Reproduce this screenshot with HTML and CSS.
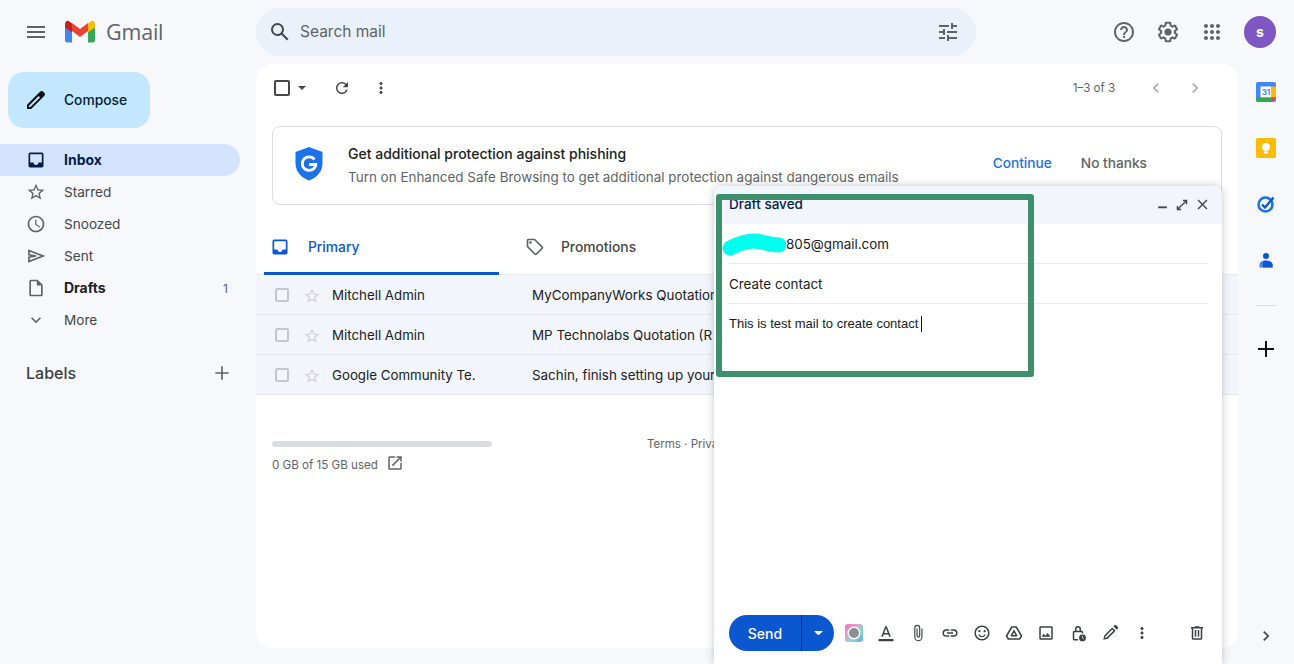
FILE: index.html
```html
<!DOCTYPE html>
<html lang="en">
<head>
<meta charset="utf-8">
<title>Gmail</title>
<link rel="stylesheet" href="styles.css">
</head>
<body>
<div class="app">
  <header class="topbar">
    <div class="brand">
      <svg class="ico menu-ico" viewBox="0 0 24 24"><path d="M3 18h18v-2H3v2zm0-5h18v-2H3v2zm0-7v2h18V6H3z"/></svg>
      <svg class="gmail-m" viewBox="0 0 30 23" width="30" height="23">
        <path fill="#4285f4" d="M0 6v14.500A2.200 2.200 0 0 0 2.200 22.500H7V10.500z"/>
        <path fill="#34a853" d="M23 10.500V22.500h4.800A2.200 2.200 0 0 0 30 20.500V6z"/>
        <path fill="#ea4335" d="M7 11V3l8 6 8-6v8l-8 6z"/>
        <path fill="#c5221f" d="M0 4.800V7.500l7 5V3.500L4 1.200C2.200 0 0 1.500 0 4.800z"/>
        <path fill="#fbbc04" d="M23 3.500v9l7-5V4.800c0-3.300-2.200-4.800-4-3.600z"/>
      </svg>
      <span class="wordmark">Gmail</span>
    </div>
    <div class="search">
      <svg class="ico search-ico" viewBox="0 0 24 24"><path d="M20.490 19l-5.730-5.730A6.960 6.960 0 0 0 16 9.500 6.500 6.500 0 1 0 9.500 16c1.420 0 2.730-.46 3.800-1.230L19 20.490 20.490 19zM5 9.500C5 7.010 7.010 5 9.500 5S14 7.010 14 9.500 11.990 14 9.500 14 5 11.990 5 9.500z"/></svg>
      <span class="search-text">Search mail</span>
      <svg class="ico" viewBox="0 0 24 24"><path d="M3 17v2h6v-2H3zM3 5v2h10V5H3zm10 16v-2h8v-2h-8v-2h-2v6h2zM7 9v2H3v2h4v2h2V9H7zm14 4v-2H11v2h10zm-6-4h2V7h4V5h-4V3h-2v6z"/></svg>
    </div>
    <div class="top-actions">
      <svg class="ico" viewBox="0 0 24 24"><path d="M11 18h2v-2h-2v2zm1-16C6.480 2 2 6.480 2 12s4.480 10 10 10 10-4.480 10-10S17.520 2 12 2zm0 18c-4.410 0-8-3.590-8-8s3.590-8 8-8 8 3.590 8 8-3.590 8-8 8zm0-14c-2.210 0-4 1.790-4 4h2c0-1.100.9-2 2-2s2 .9 2 2c0 2-3 1.750-3 5h2c0-2.250 3-2.500 3-5 0-2.210-1.790-4-4-4z"/></svg>
      <svg class="ico" viewBox="0 0 24 24"><path d="M13.850 22.250h-3.700c-.74 0-1.360-.54-1.470-1.270l-.27-1.890c-.27-.14-.53-.29-.79-.46l-1.800.72c-.7.260-1.470-.03-1.810-.65L2.200 15.530c-.35-.66-.2-1.440.36-1.880l1.530-1.190c-.01-.15-.02-.3-.02-.46 0-.15.010-.31.020-.46l-1.520-1.190c-.59-.45-.74-1.260-.37-1.880l1.850-3.190c.34-.62 1.110-.9 1.790-.63l1.810.73c.26-.17.520-.32.780-.46l.27-1.910c.110-.7.730-1.250 1.460-1.250h3.700c.74 0 1.360.54 1.470 1.270l.27 1.890c.27.140.53.29.79.46l1.800-.72c.71-.26 1.480.03 1.820.65l1.840 3.180c.36.66.2 1.440-.36 1.880l-1.520 1.190c.01.15.02.3.02.46s-.01.31-.02.46l1.520 1.190c.56.45.72 1.230.37 1.860l-1.860 3.220c-.34.62-1.110.9-1.800.63l-1.800-.72c-.26.17-.52.32-.78.46l-.27 1.910c-.1.680-.72 1.220-1.450 1.220zm-3.230-2h2.760l.37-2.550.53-.22c.44-.18.880-.44 1.340-.78l.45-.34 2.380.96 1.380-2.400-2.030-1.580.07-.56c.03-.26.060-.51.060-.78s-.03-.53-.06-.78l-.07-.56 2.030-1.580-1.390-2.400-2.390.96-.45-.35c-.42-.32-.87-.58-1.330-.77l-.52-.22-.37-2.550h-2.760l-.37 2.550-.53.21c-.44.190-.88.440-1.340.79l-.45.330-2.380-.95-1.390 2.390 2.030 1.580-.07.56a7 7 0 0 0-.06.79c0 .26.020.53.060.78l.07.56-2.030 1.580 1.380 2.400 2.390-.96.45.35c.43.330.86.580 1.330.77l.53.22.38 2.550z"/><circle cx="12" cy="12" r="3.500"/></svg>
      <svg class="ico" viewBox="0 0 24 24"><path d="M6 8c1.100 0 2-.9 2-2s-.9-2-2-2-2 .9-2 2 .9 2 2 2zm6 12c1.100 0 2-.9 2-2s-.9-2-2-2-2 .9-2 2 .9 2 2 2zm-6 0c1.100 0 2-.9 2-2s-.9-2-2-2-2 .9-2 2 .9 2 2 2zm0-6c1.100 0 2-.9 2-2s-.9-2-2-2-2 .9-2 2 .9 2 2 2zm6 0c1.100 0 2-.9 2-2s-.9-2-2-2-2 .9-2 2 .9 2 2 2zm4-8c0 1.100.9 2 2 2s2-.9 2-2-.9-2-2-2-2 .9-2 2zm-4 2c1.100 0 2-.9 2-2s-.9-2-2-2-2 .9-2 2 .9 2 2 2zm6 6c1.100 0 2-.9 2-2s-.9-2-2-2-2 .9-2 2 .9 2 2 2zm0 6c1.100 0 2-.9 2-2s-.9-2-2-2-2 .9-2 2 .9 2 2 2z"/></svg>
      <span class="avatar">s</span>
    </div>
  </header>

  <div class="body-row">
    <aside class="sidebar">
      <button class="compose">
        <svg class="ico compose-ico" viewBox="0 0 24 24"><path d="M20.410 4.940l-1.350-1.350c-.78-.78-2.050-.78-2.830 0L3 16.820V21h4.180L20.410 7.770c.79-.78.79-2.050 0-2.830zm-14 14.120L5 19v-1.360l9.660-9.660 1.410 1.410-9.660 9.670z"/></svg>
        <span>Compose</span>
      </button>
      <nav class="nav">
        <div class="nav-item active">
          <svg class="ico" viewBox="0 0 24 24"><path d="M19 3H5c-1.100 0-2 .9-2 2v14c0 1.100.9 2 2 2h14c1.100 0 2-.9 2-2V5c0-1.100-.9-2-2-2zm0 12h-4c0 1.660-1.350 3-3 3s-3-1.340-3-3H5V5h14v10z"/></svg>
          <span class="nav-label">Inbox</span>
        </div>
        <div class="nav-item">
          <svg class="ico" viewBox="0 0 24 24"><path d="M22 9.240l-7.190-.62L12 2 9.190 8.630 2 9.240l5.460 4.730L5.820 21 12 17.270 18.180 21l-1.630-7.030L22 9.240zM12 15.400l-3.760 2.270 1-4.280-3.320-2.880 4.380-.38L12 6.100l1.710 4.040 4.380.38-3.320 2.880 1 4.280L12 15.400z"/></svg>
          <span class="nav-label">Starred</span>
        </div>
        <div class="nav-item">
          <svg class="ico" viewBox="0 0 24 24"><path d="M11.990 2C6.470 2 2 6.480 2 12s4.470 10 9.990 10C17.520 22 22 17.520 22 12S17.520 2 11.990 2zM12 20c-4.420 0-8-3.580-8-8s3.580-8 8-8 8 3.580 8 8-3.580 8-8 8zm.5-13H11v6l5.250 3.150.75-1.230-4.500-2.670V7z"/></svg>
          <span class="nav-label">Snoozed</span>
        </div>
        <div class="nav-item">
          <svg class="ico" viewBox="0 0 24 24"><path class="sent-path" d="M3.500 5.500L20.500 12 3.500 18.500v-5L12 12 3.500 10.500z"/></svg>
          <span class="nav-label">Sent</span>
        </div>
        <div class="nav-item bold">
          <svg class="ico" viewBox="0 0 24 24"><path d="M14 2H6c-1.100 0-2 .9-2 2v16c0 1.100.9 2 2 2h12c1.100 0 2-.9 2-2V8l-6-6zM6 20V4h7v5h5v11H6z"/></svg>
          <span class="nav-label">Drafts</span>
          <span class="nav-count">1</span>
        </div>
        <div class="nav-item">
          <svg class="ico" viewBox="0 0 24 24"><path d="M16.590 8.590L12 13.170 7.410 8.590 6 10l6 6 6-6z"/></svg>
          <span class="nav-label">More</span>
        </div>
      </nav>
      <div class="labels">
        <span>Labels</span>
        <svg class="ico" viewBox="0 0 24 24"><path d="M20 13h-7v7h-2v-7H4v-2h7V4h2v7h7v2z"/></svg>
      </div>
    </aside>

    <main class="panel">
      <div class="toolbar">
        <div class="tool-left">
          <span class="checkbox dark"></span>
          <svg class="caret" viewBox="0 0 10 5" width="8" height="4"><path d="M0 0l5 5 5-5z"/></svg>
          <svg class="ico tool-ico" viewBox="0 0 24 24"><path d="M17.650 6.350A7.960 7.960 0 0 0 12 4a8 8 0 1 0 7.730 10h-2.080A6 6 0 1 1 12 6c1.660 0 3.140.69 4.220 1.780L13 11h7V4l-2.350 2.350z"/></svg>
          <svg class="ico tool-ico" viewBox="0 0 24 24"><path d="M12 8c1.100 0 2-.9 2-2s-.9-2-2-2-2 .9-2 2 .9 2 2 2zm0 2c-1.100 0-2 .9-2 2s.9 2 2 2 2-.9 2-2-.9-2-2-2zm0 6c-1.100 0-2 .9-2 2s.9 2 2 2 2-.9 2-2-.9-2-2-2z"/></svg>
        </div>
        <div class="tool-right">
          <span class="pager">1–3 of 3</span>
          <svg class="ico tool-ico dim" viewBox="0 0 24 24"><path d="M15.410 7.410L14 6l-6 6 6 6 1.410-1.410L10.830 12z"/></svg>
          <svg class="ico tool-ico dim" viewBox="0 0 24 24"><path d="M10 6L8.590 7.410 13.170 12l-4.580 4.590L10 18l6-6z"/></svg>
        </div>
      </div>

      <section class="banner">
        <svg class="shield" viewBox="0 0 30 34" width="30" height="34"><path fill="#1a73e8" d="M15 0l13.500 5v11c0 8.500-5.500 14.500-13.500 17.500C7 30.500 1.500 24.500 1.500 16V5z"/><path fill="none" stroke="#fff" stroke-width="2.800" d="M20.500 12.500A6.800 6.800 0 1 0 21.800 17.500H15"/></svg>
        <div class="banner-text">
          <div class="banner-title">Get additional protection against phishing</div>
          <div class="banner-sub">Turn on Enhanced Safe Browsing to get additional protection against dangerous emails</div>
        </div>
        <div class="banner-actions">
          <span class="continue">Continue</span>
          <span class="nothanks">No thanks</span>
        </div>
      </section>

      <div class="tabs">
        <div class="tab active">
          <svg class="ico tab-ico" viewBox="0 0 24 24"><path d="M19 3H5c-1.100 0-2 .9-2 2v14c0 1.100.9 2 2 2h14c1.100 0 2-.9 2-2V5c0-1.100-.9-2-2-2zm0 12h-4c0 1.660-1.350 3-3 3s-3-1.340-3-3H5V5h14v10z"/></svg>
          <span>Primary</span>
        </div>
        <div class="tab">
          <svg class="ico tab-ico" viewBox="0 0 24 24"><path d="M21.410 11.410l-8.830-8.830C12.210 2.210 11.700 2 11.170 2H4c-1.100 0-2 .9-2 2v7.170c0 .53.210 1.040.59 1.410l8.830 8.830c.78.78 2.050.78 2.830 0l7.170-7.170c.78-.78.78-2.050-.01-2.830zM12.830 20L4 11.170V4h7.170L20 12.830 12.830 20z"/><circle cx="6.500" cy="6.500" r="1.500"/></svg>
          <span>Promotions</span>
        </div>
      </div>

      <div class="rows">
        <div class="row">
          <span class="checkbox"></span>
          <svg class="star" viewBox="0 0 24 24"><path d="M22 9.240l-7.190-.62L12 2 9.190 8.630 2 9.240l5.460 4.730L5.820 21 12 17.270 18.180 21l-1.630-7.030L22 9.240zM12 15.400l-3.760 2.270 1-4.280-3.320-2.880 4.380-.38L12 6.100l1.710 4.040 4.380.38-3.320 2.880 1 4.280L12 15.400z"/></svg>
          <span class="sender">Mitchell Admin</span>
          <span class="subject">MyCompanyWorks Quotation</span>
        </div>
        <div class="row">
          <span class="checkbox"></span>
          <svg class="star" viewBox="0 0 24 24"><path d="M22 9.240l-7.190-.62L12 2 9.190 8.630 2 9.240l5.460 4.730L5.820 21 12 17.270 18.180 21l-1.630-7.030L22 9.240zM12 15.400l-3.760 2.270 1-4.280-3.320-2.880 4.380-.38L12 6.100l1.710 4.040 4.380.38-3.320 2.880 1 4.280L12 15.400z"/></svg>
          <span class="sender">Mitchell Admin</span>
          <span class="subject">MP Technolabs Quotation (R</span>
        </div>
        <div class="row">
          <span class="checkbox"></span>
          <svg class="star" viewBox="0 0 24 24"><path d="M22 9.240l-7.190-.62L12 2 9.190 8.630 2 9.240l5.460 4.730L5.820 21 12 17.270 18.180 21l-1.630-7.030L22 9.240zM12 15.400l-3.760 2.270 1-4.280-3.320-2.880 4.380-.38L12 6.100l1.710 4.040 4.380.38-3.320 2.880 1 4.280L12 15.400z"/></svg>
          <span class="sender">Google Community Te.</span>
          <span class="subject">Sachin, finish setting up your</span>
        </div>
      </div>

      <footer class="foot">
        <div class="storage">
          <div class="storage-bar"></div>
          <div class="storage-text">
            <span>0 GB of 15 GB used</span>
            <svg class="ico open-ico" viewBox="0 0 24 24"><path d="M19 19H5V5h7V3H5a2 2 0 0 0-2 2v14a2 2 0 0 0 2 2h14c1.100 0 2-.9 2-2v-7h-2v7zM14 3v2h3.590l-9.830 9.830 1.410 1.410L19 6.410V10h2V3h-7z"/></svg>
          </div>
        </div>
        <div class="terms">Terms · Priva</div>
      </footer>
    </main>

    <aside class="rail">
      <svg class="rail-app" viewBox="0 0 20 20" width="20" height="20">
        <rect width="20" height="20" rx="2" fill="#4285f4"/>
        <rect x="4.500" y="4.500" width="11" height="11" fill="#fff"/>
        <rect x="15.500" y="4.500" width="4.500" height="11" fill="#fbbc04"/>
        <path d="M0 15.500h15.500V20H2a2 2 0 0 1-2-2z" fill="#34a853"/>
        <path d="M15.500 15.500H20L15.500 20z" fill="#ea4335"/>
        <text x="10" y="13" class="cal-num">31</text>
      </svg>
      <svg class="rail-app" viewBox="0 0 20 20" width="20" height="20">
        <rect width="20" height="20" rx="2" fill="#fbbc04"/>
        <circle cx="10" cy="9" r="4" fill="#fff"/>
        <rect x="8" y="13.500" width="4" height="2" fill="#fff"/>
      </svg>
      <svg class="rail-app" viewBox="0 0 20 20" width="20" height="20">
        <circle cx="9.500" cy="10.500" r="7" fill="none" stroke="#1a73e8" stroke-width="2.600"/>
        <path d="M6 10.500l3 3 8.500-10" fill="none" stroke="#0b57d0" stroke-width="2.400"/>
      </svg>
      <svg class="rail-app" viewBox="0 0 20 20" width="20" height="20">
        <circle cx="10" cy="6" r="3" fill="#0b57d0"/>
        <path d="M3.500 17.500v-3c0-2.500 3-4 6.500-4s6.500 1.500 6.500 4v3z" fill="#4285f4"/>
        <path d="M7 17.500v-5c0-1.200 1.500-2 3-2s6.500 1.500 6.500 4v3z" fill="#0b57d0"/>
      </svg>
      <div class="rail-sep"></div>
      <svg class="ico rail-plus" viewBox="0 0 24 24"><path d="M20 13h-7v7h-2v-7H4v-2h7V4h2v7h7v2z"/></svg>
      <svg class="ico rail-next" viewBox="0 0 24 24"><path d="M10 6L8.590 7.410 13.170 12l-4.580 4.590L10 18l6-6z"/></svg>
    </aside>
  </div>
</div>

<section class="composer">
  <div class="composer-head">
    <span class="composer-title">Draft saved</span>
    <div class="composer-win">
      <svg viewBox="0 0 24 24" class="win-ico"><path d="M5 15h14v3H5z"/></svg>
      <svg viewBox="0 0 24 24" class="win-ico expand"><path d="M21 3h-7.500v2.400h3.400L5.400 16.900V13.500H3V21h7.500v-2.400H7.100L18.600 7.100v3.400H21z"/></svg>
      <svg viewBox="0 0 24 24" class="win-ico close"><path d="M19 6.410L17.590 5 12 10.590 6.410 5 5 6.410 10.590 12 5 17.590 6.410 19 12 13.410 17.590 19 19 17.590 13.410 12z"/></svg>
    </div>
  </div>
  <div class="composer-fields">
    <div class="field">805@gmail.com</div>
    <div class="field">Create contact</div>
    <div class="composer-body">This is test mail to create contact<span class="cursor"></span></div>
  </div>
  <div class="composer-foot">
    <div class="send">
      <span class="send-main">Send</span>
      <span class="send-more"><svg viewBox="0 0 10 5" width="9" height="4.500"><path d="M0 0l5 5 5-5z" fill="#fff"/></svg></span>
    </div>
    <svg class="c-ico" viewBox="0 0 18 18"><defs><linearGradient id="rb" x1="0" y1="0" x2="1" y2="1"><stop offset="0" stop-color="#f06bb0"/><stop offset=".35" stop-color="#e9a0d0"/><stop offset=".65" stop-color="#7fd8c8"/><stop offset="1" stop-color="#6aa5f5"/></linearGradient></defs><rect width="18" height="18" rx="3" fill="url(#rb)"/><circle cx="9" cy="9" r="6.500" fill="#fff"/><circle cx="9" cy="9" r="5" fill="#8a8f94"/></svg>
    <svg class="c-ico" viewBox="0 0 24 24"><path d="M2 20h20v3H2z" fill="#3c4043"/><path d="M11 3L5.500 17h2.300l1.100-3h6.200l1.100 3h2.300L13 3zm-1.400 9L12 5.700 14.400 12z"/></svg>
    <svg class="c-ico" viewBox="0 0 24 24"><path d="M16.500 6v11.500a4 4 0 0 1-8 0V5a2.500 2.500 0 0 1 5 0v10.500a1 1 0 0 1-2 0V6H10v9.500a2.500 2.500 0 0 0 5 0V5a4 4 0 0 0-8 0v12.500a5.500 5.500 0 0 0 11 0V6z"/></svg>
    <svg class="c-ico" viewBox="0 0 24 24"><path d="M3.900 12c0-1.710 1.390-3.100 3.100-3.100h4V7H7a5 5 0 0 0 0 10h4v-1.900H7c-1.710 0-3.100-1.390-3.100-3.100zM8 13h8v-2H8v2zm9-6h-4v1.900h4c1.710 0 3.100 1.390 3.100 3.100s-1.390 3.100-3.100 3.100h-4V17h4a5 5 0 0 0 0-10z"/></svg>
    <svg class="c-ico" viewBox="0 0 24 24"><circle cx="15.500" cy="9.500" r="1.500"/><circle cx="8.500" cy="9.500" r="1.500"/><path d="M11.990 2C6.470 2 2 6.480 2 12s4.470 10 9.990 10C17.520 22 22 17.520 22 12S17.520 2 11.990 2zM12 20c-4.420 0-8-3.580-8-8s3.580-8 8-8 8 3.580 8 8-3.580 8-8 8zm0-4c-1.480 0-2.750-.81-3.450-2H6.880c.8 2.050 2.790 3.500 5.120 3.500s4.320-1.450 5.120-3.500h-1.670c-.7 1.190-1.970 2-3.450 2z"/></svg>
    <svg class="c-ico" viewBox="0 0 24 24"><path fill="none" stroke="#3c4043" stroke-width="2" stroke-linejoin="round" d="M9 4h6l7 12-2.500 4h-15L2 16zM12 9l-3.500 6.500h7z"/></svg>
    <svg class="c-ico" viewBox="0 0 24 24"><path d="M19 5v14H5V5h14m0-2H5c-1.100 0-2 .9-2 2v14c0 1.100.9 2 2 2h14c1.100 0 2-.9 2-2V5c0-1.100-.9-2-2-2zm-4.860 8.860l-3 3.870L9 13.140 6 17h12l-3.860-5.140z"/></svg>
    <svg class="c-ico" viewBox="0 0 24 24"><path d="M17 9h-1V6.500a4 4 0 0 0-8 0V9H7a2 2 0 0 0-2 2v9a2 2 0 0 0 2 2h5v-2H7v-9h10v1.500h2V11a2 2 0 0 0-2-2zm-3 0h-4V6.500a2 2 0 0 1 4 0z"/><circle cx="18" cy="18.500" r="4.500"/><path d="M18 16v2.700l1.800 1" stroke="#fff" stroke-width="1" fill="none"/></svg>
    <svg class="c-ico" viewBox="0 0 24 24"><path d="M3 21l1.500-6L15 4.500l4.500 4.500L9 19.500zM6.200 16l-.8 2.600 2.600-.8L16.700 9 15 7.300zM16.500 3l1.500-1.500a1.500 1.500 0 0 1 2 0l2.500 2.500a1.500 1.500 0 0 1 0 2L21 7.500z"/></svg>
    <svg class="c-ico" viewBox="0 0 24 24"><path d="M12 8c1.100 0 2-.9 2-2s-.9-2-2-2-2 .9-2 2 .9 2 2 2zm0 2c-1.100 0-2 .9-2 2s.9 2 2 2 2-.9 2-2-.9-2-2-2zm0 6c-1.100 0-2 .9-2 2s.9 2 2 2 2-.9 2-2-.9-2-2-2z"/></svg>
    <svg class="c-ico trash" viewBox="0 0 24 24"><path d="M15 4V3H9v1H4v2h1v13c0 1.100.9 2 2 2h10c1.100 0 2-.9 2-2V6h1V4h-5zm2 15H7V6h10v13zM9 8h2v9H9zm4 0h2v9h-2z"/></svg>
  </div>
</section>

<svg class="scribble" viewBox="0 0 64 26" width="64" height="26"><path d="M8 17C16 13 24 10 32 10c8 0 14 4 25 4" fill="none" stroke="#00ffee" stroke-width="15" stroke-linecap="round"/></svg>
<div class="highlight"></div>
</body>
</html>
```
FILE: styles.css
```css
* { box-sizing: border-box; }
html, body { margin: 0; height: 100%; overflow: hidden; }
body {
  background: #f6f8fc;
  font-family: Inter, "Liberation Sans", sans-serif;
  color: #202124;
  font-size: 13.400px;
}
.ico { width: 24px; height: 24px; fill: #5f6368; flex: none; display: block; }
.app { width: 1294px; height: 664px; display: flex; flex-direction: column; }

/* top bar */
.topbar { height: 64px; display: flex; align-items: center; flex: none; }
.brand { width: 256px; display: flex; align-items: center; padding-left: 24px; flex: none; }
.menu-ico { margin-right: 17px; fill: #5f6368; }
.gmail-m { flex: none; margin-top: -1px; }
.wordmark { font-family: "Open Sans", sans-serif; font-size: 21.500px; color: #5f6368; margin: -1px 0 0 11px; letter-spacing: -0.2px; }
.search {
  width: 720px; height: 48px; background: #eaf1fb; border-radius: 24px;
  display: flex; align-items: center; padding: 0 8px 0 12px;
}
.search-text { flex: 1; margin: -2px 0 0 8px; font-size: 15.500px; color: #5f6368; }
.search .ico:last-child { margin-right: 8px; }
.search-ico { fill: #444746; }
.top-actions { margin-left: auto; display: flex; align-items: center; gap: 20px; padding-right: 18px; margin-top: -1px; }
.avatar {
  width: 32px; height: 32px; border-radius: 50%; background: #7e57c2; color: #fff;
  display: flex; align-items: center; justify-content: center; font-size: 14px; font-weight: 700;
}

/* layout */
.body-row { flex: 1; display: flex; min-height: 0; }
.sidebar { width: 256px; flex: none; }
.compose {
  margin: 8px 0 0 8px; width: 142px; height: 56px; border: 0; border-radius: 16px;
  background: #c2e7ff; display: flex; align-items: center; padding: 0 0 0 16px;
  font: 500 13.800px Inter, sans-serif; color: #001d35;
}
.compose span { margin-left: 16px; margin-top: -1px; }
.compose-ico { fill: #111; }
.nav { margin-top: 16px; width: 240px; }
.nav-item { height: 32px; display: flex; align-items: center; padding: 0 12px 0 26px; border-radius: 0 16px 16px 0; color: #444746; font-size: 13.600px; }
.nav-label { margin-left: 18px; flex: 1; position: relative; top: -0.5px; }
.nav-item.active { background: #d3e3fd; color: #041e49; font-weight: 700; font-size: 14px; }
.nav-item.active .ico { fill: #041e49; }
.nav-item.bold { font-weight: 700; color: #202124; font-size: 14px; }
.nav-item .ico { width: 20px; height: 20px; }
.sent-path { fill: none; stroke: #5f6368; stroke-width: 2; stroke-linejoin: miter; }
.nav-count { font-weight: 400; font-size: 12px; color: #5f6368; }
.labels { display: flex; align-items: center; justify-content: space-between; width: 240px; padding: 0 8px 0 26px; margin-top: 27px; font-size: 16px; font-weight: 500; color: #3c4043; }
.labels .ico { width: 20px; height: 20px; }

.panel { width: 982px; flex: none; height: 584px; background: #fff; border-radius: 16px; display: flex; flex-direction: column; }
.toolbar { height: 48px; display: flex; align-items: center; justify-content: space-between; padding: 0 33px 0 18px; flex: none; }
.tool-left, .tool-right { display: flex; align-items: center; }
.tool-ico { width: 18px; height: 18px; fill: #444746; }
.tool-right .tool-ico { width: 20px; height: 20px; }
.tool-left .caret ~ .tool-ico + .tool-ico { margin-left: 21px; }
.caret { fill: #444746; margin: 0 27px 0 8px; flex: none; }
.checkbox { width: 14px; height: 14px; border: 2px solid #c4c7c5; border-radius: 2px; flex: none; display: block; }
.checkbox.dark { border-color: #444746; width: 16px; height: 16px; }
.pager { font-size: 11.500px; color: #5f6368; margin-right: 31px; }
.dim { fill: #a8abae; }
.tool-right .dim + .dim { margin-left: 19px; }

.banner {
  margin: 14px 16px 0; height: 79px; border: 1px solid #dadce0; border-radius: 8px;
  display: flex; align-items: center; padding-left: 21px; flex: none;
}
.shield { flex: none; margin-top: -4px; }
.banner-text { margin-left: 24px; flex: 1; white-space: nowrap; }
.banner-title { font-weight: 500; font-size: 14px; line-height: 20px; color: #202124; }
.banner-sub { color: #5f6368; line-height: 20px; margin-top: 3px; font-size: 13.440px; }
.banner-actions { display: flex; gap: 29px; padding-right: 74px; margin-top: -5px; font-size: 13.700px; }
.continue { color: #1a73e8; font-weight: 500; }
.nothanks { color: #5f6368; font-weight: 500; }

.tabs { display: flex; height: 70px; flex: none; padding-left: 8px; border-bottom: 1px solid #e8eaed; }
.tab { width: 235px; display: flex; align-items: center; padding: 13px 0 0 6px; color: #444746; font-weight: 500; margin-bottom: -1px; font-size: 13.800px; }
.tab span { margin-left: 18px; }
.tab.active { color: #0b57d0; border-bottom: 3px solid #0b57d0; padding-top: 16px; }
.tab-ico { width: 20px; height: 20px; }
.tab.active .tab-ico { fill: #0b57d0; }
.tab + .tab { padding-left: 26px; }
.tab + .tab span { margin-left: 16px; }

.row {
  height: 40px; background: #f2f6fc; border-bottom: 1px solid #e4e8ee; display: flex; align-items: center;
  padding-left: 19px; white-space: nowrap; color: #202124;
}
.star { width: 18px; height: 18px; fill: #d0d2d4; margin: 2px 0 0 14px; flex: none; }
.sender { width: 200px; margin-left: 11px; flex: none; font-size: 13.300px; }
.subject { flex: none; }

.foot { display: flex; padding: 46px 16px 0; flex: none; align-items: flex-start; }
.storage-bar { width: 220px; height: 6px; border-radius: 3px; background: #dadce0; }
.storage-text { display: flex; align-items: center; margin-top: 10px; font-size: 11.600px; color: #5f6368; }
.open-ico { width: 18px; height: 18px; margin-left: 8px; margin-top: -3px; }
.terms { font-size: 11.500px; color: #5f6368; margin: -4px 0 0 155px; white-space: nowrap; }

/* right rail */
.rail { flex: 1; display: flex; flex-direction: column; align-items: center; padding-top: 18px; position: relative; }
.rail-app { flex: none; margin-bottom: 36px; }
.cal-num { font: 700 8px Inter, sans-serif; fill: #4285f4; text-anchor: middle; }
.rail-sep { width: 20px; height: 1px; background: #dadce0; margin-top: -1px; }
.rail-plus { fill: #111; margin-top: 31px; }
.rail-next { position: absolute; bottom: 18px; left: 18px; width: 20px; height: 20px; fill: #444746; }

/* compose window */
.composer {
  position: absolute; left: 714px; top: 186px; width: 508px; height: 478px; background: #fff;
  border-radius: 8px 8px 0 0; box-shadow: 0 0 8px rgba(60,64,67,.3);
  display: flex; flex-direction: column; font-size: 13.400px;
}
.composer-head {
  height: 38px; background: #f2f6fc; border-radius: 8px 8px 0 0; display: flex; align-items: center;
  justify-content: space-between; padding: 0 11px 0 15px; flex: none;
}
.composer-title { font-weight: 500; font-size: 13.500px; color: #041e49; position: relative; top: -1px; }
.composer-win { display: flex; gap: 5px; align-items: center; margin-top: -1px; }
.win-ico { width: 15px; height: 15px; fill: #444746; display: block; }
.win-ico.expand { width: 14px; height: 14px; }
.win-ico.close { width: 17px; height: 17px; }
.composer-fields { padding: 0 15px; flex: 1; }
.field { height: 40px; border-bottom: 1px solid #e8eaed; display: flex; align-items: center; }
.field:first-child { padding-left: 57px; }
.composer-body { padding-top: 12px; font-family: "Liberation Sans", Arial, sans-serif; font-size: 13px; line-height: 16px; color: #202124; }
.cursor { display: inline-block; width: 1px; height: 16px; background: #111; margin-left: 3px; vertical-align: top; }
.composer-foot { height: 66px; flex: none; display: flex; align-items: center; padding: 4px 0 0 15px; position: relative; }
.send { display: flex; height: 36px; background: #0b57d0; border-radius: 18px; color: #fff; font-weight: 500; font-size: 14px; margin-right: 11px; flex: none; }
.send-main { width: 73px; display: flex; align-items: center; justify-content: center; border-right: 1px solid #062e6f; }
.send-more { width: 32px; display: flex; align-items: center; justify-content: center; }
.c-ico { width: 18px; height: 18px; fill: #3c4043; margin-right: 14px; flex: none; display: block; }
.trash { position: absolute; right: 16px; margin: 0; }

/* annotations on the screenshot */
.scribble { position: absolute; left: 722px; top: 231px; }
.highlight { position: absolute; left: 716px; top: 194px; width: 318px; height: 183px; border: 6px solid #3e8f6c; border-radius: 3px; }
```
